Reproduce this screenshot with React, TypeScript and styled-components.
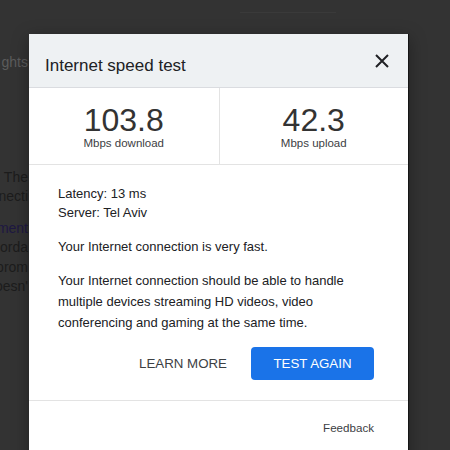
import * as React from "react";
import styled, { createGlobalStyle } from "styled-components";

const GlobalStyle = createGlobalStyle`
  html, body {
    margin: 0;
    padding: 0;
    background: #333333;
  }
  body {
    font-family: "Liberation Sans", Arial, sans-serif;
  }
`;

const Page = styled.div`
  position: relative;
  width: 450px;
  height: 450px;
  overflow: hidden;
  background: #333333;
`;

const TopBox = styled.div`
  margin-left: 240px;
  width: 96px;
  height: 12px;
  border-bottom: 1px solid #3a3a3a;
`;

const Backdrop = styled.div`
  width: 28px;
  display: flex;
  flex-direction: column;
  align-items: flex-end;
  font-size: 14px;
  line-height: 19.5px;
`;

const BackLine = styled.div<{ $top?: number; $tone?: "light" | "dark" | "link" }>`
  margin-top: ${(p) => p.$top ?? 0}px;
  white-space: nowrap;
  color: ${(p) =>
    p.$tone === "light" ? "#5c5c5c" : p.$tone === "link" ? "#1e1842" : "#1c1c1c"};
`;

const Dialog = styled.div`
  position: absolute;
  left: 29px;
  top: 34px;
  width: 380px;
  background: #ffffff;
  color: #202124;
  border-right: 1px solid #151515;
  box-sizing: border-box;
  box-shadow: 0 4px 16px rgba(0, 0, 0, 0.35);
`;

const Header = styled.div`
  display: flex;
  align-items: center;
  justify-content: space-between;
  height: 54px;
  box-sizing: border-box;
  padding: 0 19px 0 16px;
  background: #eef1f3;
  border-bottom: 1px solid #dadce0;
`;

const Title = styled.div`
  font-size: 17px;
  line-height: 20px;
  margin-top: 10px;
  color: #202124;
`;

const CloseButton = styled.button`
  width: 15px;
  height: 15px;
  padding: 0;
  border: none;
  background: none;
  display: flex;
  align-items: center;
  justify-content: center;
  cursor: pointer;
`;

const Stats = styled.div`
  display: grid;
  grid-template-columns: 1fr 1fr;
  border-bottom: 1px solid #e3e3e3;
`;

const Stat = styled.div<{ $divider?: boolean }>`
  display: flex;
  flex-direction: column;
  align-items: center;
  height: 76px;
  box-sizing: border-box;
  padding-top: 16px;
  border-left: ${(p) => (p.$divider ? "1px solid #e3e3e3" : "none")};
`;

const Value = styled.div`
  font-size: 32px;
  line-height: 32px;
  color: #333333;
`;

const Unit = styled.div`
  font-size: 11.5px;
  line-height: 14px;
  color: #3c4043;
`;

const Body = styled.div`
  padding: 19px 29px 0 29px;
  font-size: 13px;
`;

const InfoLine = styled.div`
  line-height: 19px;
  color: #202124;
`;

const Paragraph = styled.p<{ $gap: number }>`
  margin: ${(p) => p.$gap}px 0 0;
  line-height: 21px;
  color: #202124;
`;

const Actions = styled.div`
  display: flex;
  justify-content: flex-end;
  align-items: center;
  gap: 16px;
  padding: 14px 34px 20px 0;
  border-bottom: 1px solid #e3e3e3;
`;

const Button = styled.button<{ $primary?: boolean }>`
  font-family: "Liberation Sans", Arial, sans-serif;
  font-size: 13.3px;
  height: 33px;
  padding: ${(p) => (p.$primary ? "0 22px" : "0 8px")};
  border: none;
  border-radius: 4px;
  background: ${(p) => (p.$primary ? "#1a73e8" : "transparent")};
  color: ${(p) => (p.$primary ? "#ffffff" : "#3c4043")};
  width: ${(p) => (p.$primary ? "123px" : "auto")};
  cursor: pointer;
`;

const Footer = styled.div`
  display: flex;
  justify-content: flex-end;
  padding: 20px 34px 40px 0;
`;

const FeedbackLink = styled.a`
  font-size: 11.6px;
  line-height: 14px;
  color: #3c4043;
  text-decoration: none;
`;

const App: React.FunctionComponent = () => (
  <>
    <GlobalStyle />
    <Page>
      <TopBox />
      <Backdrop>
        <BackLine $top={40} $tone="light">
          ghts
        </BackLine>
        <BackLine $top={95}>. The</BackLine>
        <BackLine>necti</BackLine>
        <BackLine $top={12} $tone="link">
          ment
        </BackLine>
        <BackLine>corda</BackLine>
        <BackLine>prom</BackLine>
        <BackLine>oesn'</BackLine>
      </Backdrop>
      <Dialog>
        <Header>
          <Title>Internet speed test</Title>
          <CloseButton aria-label="Close">
            <svg width="14" height="14" viewBox="0 0 14 14">
              <path d="M1 1L13 13M13 1L1 13" stroke="#202124" strokeWidth="2" />
            </svg>
          </CloseButton>
        </Header>
        <Stats>
          <Stat>
            <Value>103.8</Value>
            <Unit>Mbps download</Unit>
          </Stat>
          <Stat $divider>
            <Value>42.3</Value>
            <Unit>Mbps upload</Unit>
          </Stat>
        </Stats>
        <Body>
          <InfoLine>Latency: 13 ms</InfoLine>
          <InfoLine>Server: Tel Aviv</InfoLine>
          <Paragraph $gap={14}>Your Internet connection is very fast.</Paragraph>
          <Paragraph $gap={13}>
            Your Internet connection should be able to handle multiple devices
            streaming HD videos, video conferencing and gaming at the same time.
          </Paragraph>
        </Body>
        <Actions>
          <Button>LEARN MORE</Button>
          <Button $primary>TEST AGAIN</Button>
        </Actions>
        <Footer>
          <FeedbackLink href="#">Feedback</FeedbackLink>
        </Footer>
      </Dialog>
    </Page>
  </>
);

export default App;
